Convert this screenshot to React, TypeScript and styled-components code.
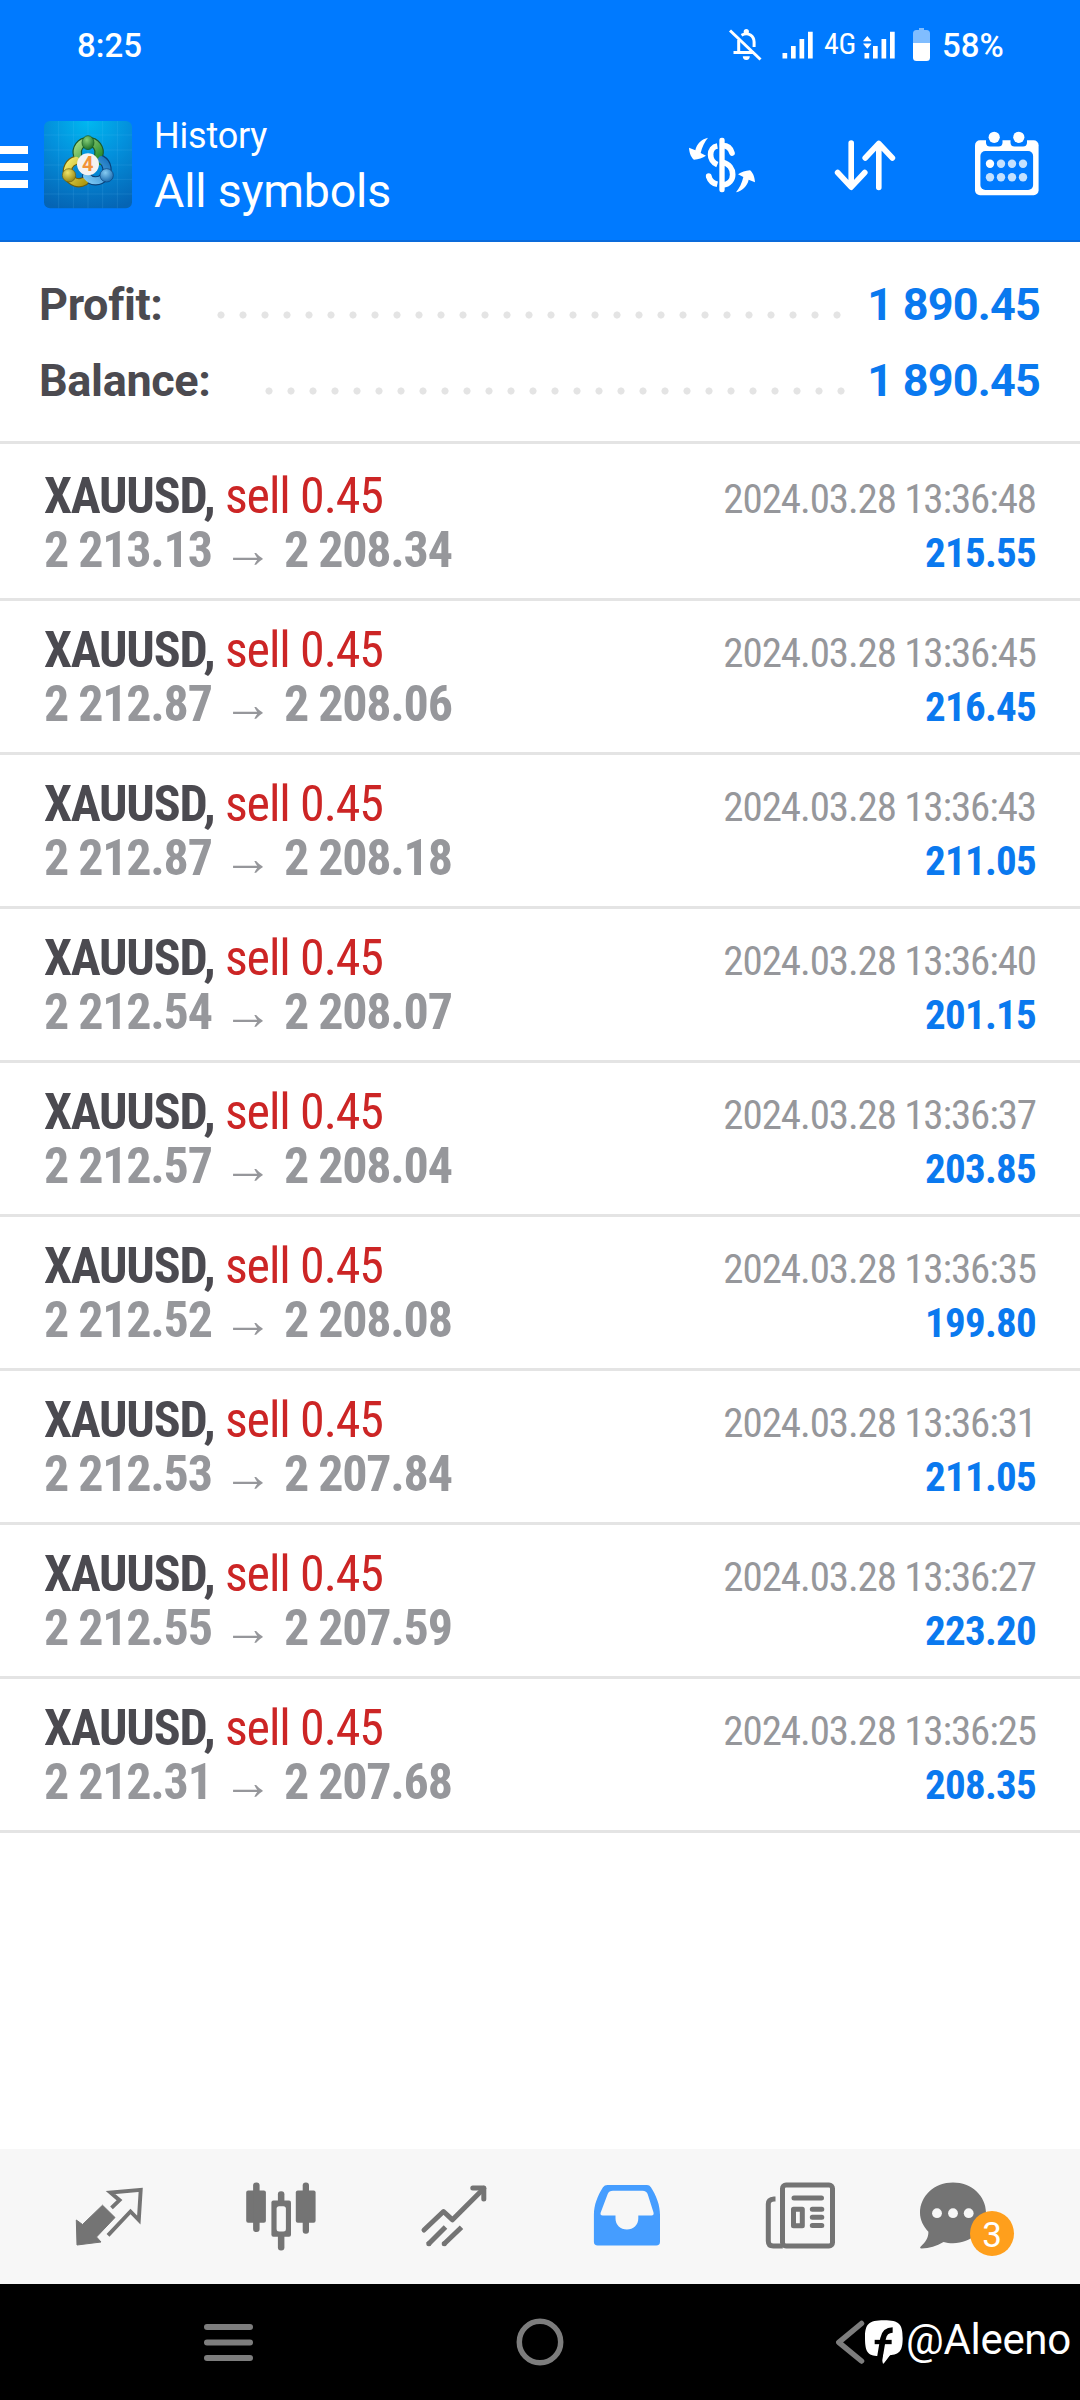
import React from 'react';
import styled, { createGlobalStyle } from 'styled-components';

const GlobalStyle = createGlobalStyle`
  * { box-sizing: border-box; }
  body { margin: 0; background: #fff; font-family: Roboto, 'Noto Sans', sans-serif; }
  svg { display: block; flex: none; }
`;

const Screen = styled.div`
  width: 1080px;
  height: 2400px;
  display: flex;
  flex-direction: column;
  background: #fff;
  overflow: hidden;
`;

/* ---------- header ---------- */

const Header = styled.header`
  height: 242px;
  flex: none;
  color: #fff;
  background: #007aff;
  border-bottom: 2px solid #0a6bdb;
`;

const StatusBar = styled.div`
  height: 92px;
  padding: 0 76px 2px 77px;
  display: flex;
  align-items: center;
  font-size: 33px;
  font-weight: 500;
`;

const Clock = styled.span`
  flex: 1;
`;

const StatusIcons = styled.div`
  display: flex;
  align-items: center;
`;

const SignalSlot = styled.span<{ $before: number }>`
  margin-left: ${(p) => p.$before}px;
`;

const Network = styled.span`
  width: 31px;
  margin: -4px 7px 0 10px;
  font-size: 30px;
  font-weight: 400;
  font-stretch: 75%;
  letter-spacing: -0.4px;
`;

const Percent = styled.span`
  width: 62px;
  margin-left: 11px;
`;

const AppBar = styled.div`
  height: 146px;
  display: flex;
  align-items: center;
  padding-right: 41px;
`;

const MenuButton = styled.div`
  width: 28px;
  margin-right: 16px;
  display: flex;
  flex-direction: column;
  gap: 9px;
  padding-top: 4px;
`;

const MenuBar = styled.span`
  height: 8px;
  background: #fff;
`;

const Titles = styled.div`
  flex: 1;
  padding: 4px 0 0 22px;
`;

const Section = styled.div`
  font-size: 36px;
  line-height: 48px;
  letter-spacing: -0.2px;
`;

const Filter = styled.div`
  font-size: 46.5px;
  line-height: 63px;
  letter-spacing: -0.2px;
`;

const Actions = styled.div`
  display: flex;
  align-items: center;
  gap: 77px;
`;

/* ---------- summary ---------- */

const Summary = styled.section`
  height: 205px;
  flex: none;
  padding: 25px 40px 0 39px;
  background: linear-gradient(#e4e4e4, #e4e4e4) 0 199px / 100% 3px no-repeat;
`;

const SummaryLine = styled.div`
  height: 76px;
  display: flex;
  align-items: center;
  font-size: 45px;
  font-weight: 700;
  line-height: 76px;
`;

const SummaryLabel = styled.span`
  color: #4b4a50;
  letter-spacing: -0.35px;
`;

const Leader = styled.span`
  flex: 1;
  height: 10px;
  margin: 20px 0 0 47px;
  background: radial-gradient(circle at 11px 5px, #e4e4e4 3.2px, transparent 3.9px) 0 0 / 22px 10px repeat-x;
`;

const SummaryValue = styled.span`
  width: 188px;
  text-align: right;
  color: #0a79ef;
  letter-spacing: -0.8px;
`;

/* ---------- deals ---------- */

const DealList = styled.main`
  flex: 1;
`;

const Deal = styled.div`
  height: 154px;
  padding: 22px 44px 0 44px;
  border-bottom: 3px solid #e4e4e4;
  font-stretch: 75%;
`;

const DealLine = styled.div`
  height: 54px;
  display: flex;
  justify-content: space-between;
  align-items: baseline;
  line-height: 54px;
  font-size: 50px;
  white-space: pre;
`;

const Symbol = styled.span`
  font-weight: 700;
  color: #4b4a50;
  letter-spacing: -1.2px;
`;

const Side = styled.span`
  font-weight: 400;
  color: #cc2525;
  letter-spacing: -1.1px;
`;

const Prices = styled.span`
  display: flex;
  align-items: baseline;
  font-weight: 700;
  color: #96979b;
  letter-spacing: -1.25px;
`;

const Price = styled.span`
  display: block;
`;

const OpenPrice = styled(Price)`
  width: 179px;
`;

const Arrow = styled.span`
  width: 61px;
  letter-spacing: 0;
`;

const Time = styled.span`
  font-size: 41px;
  color: #96979b;
  letter-spacing: -1.1px;
`;

const Profit = styled.span`
  font-size: 41px;
  font-weight: 700;
  color: #0a79ef;
  letter-spacing: -0.75px;
`;

/* ---------- bottom bars ---------- */

const TabBar = styled.nav`
  height: 135px;
  flex: none;
  display: grid;
  grid-template-columns: repeat(6, 173px);
  padding-left: 21px;
  background: #f7f7f7;
`;

const Tab = styled.div`
  position: relative;
  display: flex;
  align-items: center;
  justify-content: center;
`;

const ChatSlot = styled.div`
  margin-right: 38px;
`;

const Badge = styled.span`
  position: absolute;
  left: 84px;
  top: 62px;
  width: 44px;
  height: 45px;
  border-radius: 50%;
  background: #ff9f1c;
  color: #fff;
  font-size: 35px;
  line-height: 49px;
  text-align: center;
`;

const SystemNav = styled.footer`
  position: relative;
  height: 116px;
  flex: none;
  padding: 0 72px;
  display: grid;
  grid-template-columns: repeat(3, 312px);
  align-items: center;
  justify-items: center;
  background: #000;
`;

const Watermark = styled.div`
  position: absolute;
  left: 865px;
  top: 36px;
  display: flex;
  align-items: flex-start;
  color: #fff;
  font-size: 42px;
  line-height: 44px;
`;

const Handle = styled.span`
  margin: -2px 0 0 3px;
  letter-spacing: -0.3px;
`;

/* ---------- icons ---------- */

const BellOff = () => (
  <svg width="34" height="36" viewBox="728 26 34 36" fill="none" stroke="#fff" strokeWidth="3">
    <path d="M730 29.5 760.5 58.5" />
    <path d="M738.7 39v12.5M733.5 51.6H754" />
    <path d="M741.5 34.2c7-4 12.6 1.2 12.6 6.800v5" />
    <circle cx="746.3" cy="30.500" r="2.600" fill="#fff" stroke="none" />
    <path d="M742.800 55.300h7a3.500 3.700 0 0 1-7 0z" fill="#fff" stroke="none" />
  </svg>
);

const Signal = ({ data }: { data?: boolean }) => (
  <svg width="33" height="30" viewBox="0 0 33 30" fill="#fff">
    <path d="M1.500 23h4.700v5.500H1.500zM10 16h4.700v12.500H10zM18.500 9h4.700v19.500h-4.700zM27 1.700h4.700v26.800H27z" />
    {data && <path d="M.3 10.700 4.300 6l4 4.700v.6h-8zM.3 13.500h8v.6l-4 4.700-4-4.700z" />}
  </svg>
);

const Battery = () => (
  <svg width="18" height="34" viewBox="0 0 18 34" fill="#fff">
    <path opacity=".5" d="M6 0h5v2h2.500A3.500 3.500 0 0 1 17 5.500V15H0V5.500A3.500 3.500 0 0 1 3.500 2H6z" />
    <path d="M0 15h17v14.500a3.500 3.500 0 0 1-3.500 3.500h-10A3.500 3.500 0 0 1 0 29.500z" />
  </svg>
);

const Logo = () => (
  <svg width="88" height="88" viewBox="0 0 264 264">
    <defs>
      <radialGradient id="sky" cx=".5" cy="0" r="1.050">
        <stop offset="0" stopColor="#00b8f0" />
        <stop offset=".45" stopColor="#0390dc" />
        <stop offset="1" stopColor="#0564b4" />
      </radialGradient>
      <linearGradient id="green" x1="0" y1="0" x2="1" y2="1">
        <stop offset="0" stopColor="#a4dc86" />
        <stop offset="1" stopColor="#1d8424" />
      </linearGradient>
      <linearGradient id="gold" x1="0" y1="0" x2="1" y2="1">
        <stop offset="0" stopColor="#f2ea6c" />
        <stop offset="1" stopColor="#b09a10" />
      </linearGradient>
      <linearGradient id="blue" x1="1" y1="0" x2="0" y2="1">
        <stop offset="0" stopColor="#1b76c0" />
        <stop offset="1" stopColor="#7cc8f4" />
      </linearGradient>
      <radialGradient id="greenBall" cx=".4" cy=".3" r=".8">
        <stop offset="0" stopColor="#86cf78" />
        <stop offset="1" stopColor="#0f6420" />
      </radialGradient>
      <radialGradient id="goldBall" cx=".4" cy=".3" r=".8">
        <stop offset="0" stopColor="#eee468" />
        <stop offset="1" stopColor="#8a7a08" />
      </radialGradient>
      <radialGradient id="blueBall" cx=".4" cy=".3" r=".8">
        <stop offset="0" stopColor="#86cbf2" />
        <stop offset="1" stopColor="#0c5ea6" />
      </radialGradient>
    </defs>
    <rect width="264" height="262" rx="18" fill="url(#sky)" />
    <path stroke="#7fd4ff" strokeOpacity=".2" strokeWidth="2" d="M88 0v262M132 0v262M176 0v262M44 0v262M220 0v262M0 42h264M0 87h264M0 132h264M0 175h264M0 219h264" />
    <g fill="none" strokeLinecap="round">
      <path stroke="#1c5a2c" strokeWidth="28" d="M101 104a33 33 0 1 1 63 0v14" />
      <path stroke="#6a5e10" strokeWidth="28" d="M122 180a34 34 0 1 1-26-62" />
      <path stroke="#0a4078" strokeWidth="28" d="M172 116a34 34 0 1 1-44 50" />
      <path stroke="url(#green)" strokeWidth="21" d="M101 104a33 33 0 1 1 63 0v18" />
      <path stroke="url(#gold)" strokeWidth="21" d="M122 180a34 34 0 1 1-26-62" />
      <path stroke="url(#blue)" strokeWidth="21" d="M172 116a34 34 0 1 1-44 50" />
    </g>
    <ellipse cx="132" cy="65" rx="18" ry="21" fill="url(#greenBall)" stroke="#14561f" strokeWidth="2" />
    <circle cx="75" cy="163" r="20" fill="url(#goldBall)" stroke="#6a5e10" strokeWidth="2" />
    <circle cx="188" cy="163" r="20" fill="url(#blueBall)" stroke="#0a4078" strokeWidth="2" />
    <circle cx="132" cy="130" r="33" fill="#f4f2f2" />
    <text x="131" y="151" textAnchor="middle" fontFamily="Roboto, sans-serif" fontWeight="700" fontSize="60" fill="#f29338">4</text>
  </svg>
);

const DealsCurrency = () => (
  <svg width="70" height="60" viewBox="21 30 210 180" fill="#fff">
    <rect x="118" y="38" width="16" height="164" rx="7" />
    <g fill="none" stroke="#fff" strokeWidth="17">
      <path d="M112 63C86 67 84 108 112 119" />
      <path d="M128 62c14 0 24 8 28 22" strokeLinecap="round" />
      <path d="M128 112C168 122 168 176 128 180" />
      <path d="M112 178c-14-3-22-11-26-24" />
      <path d="M86 153v.100" strokeLinecap="round" />
    </g>
    <path d="M84 38C66 42 50 56 46 76L27 68C28 85 34 98 42 104C55 103 68 99 78 92L62 84C66 66 74 50 84 38z" />
    <path d="M168 202C186 198 202 184 206 164L225 172C224 155 218 142 210 136C197 137 184 141 174 148L190 156C186 174 178 190 168 202z" />
  </svg>
);

const Sort = () => (
  <svg width="64" height="54" viewBox="834 138 64 54" fill="none" stroke="#fff" strokeWidth="5.600" strokeLinecap="round" strokeLinejoin="round">
    <path d="M851.200 143v44M837.600 172.500l13.600 14.700 13.600-14.700" />
    <path d="M878.800 187.500v-44M865.200 158l13.600-14.500L892.400 158" />
  </svg>
);

const Calendar = () => (
  <svg width="64" height="68" viewBox="975 131 64 68">
    <rect x="975" y="140.300" width="63.600" height="55" rx="5" fill="#fff" />
    <path fill="#007aff" d="M986 139h16.500v4a4 4 0 0 1-4 3.500h-8.500a4 4 0 0 1-4-3.500zM1010.500 139h16.500v4a4 4 0 0 1-4 3.500h-8.500a4 4 0 0 1-4-3.500z" />
    <circle cx="994.200" cy="137.300" r="5.600" fill="#fff" />
    <circle cx="1018.800" cy="137.300" r="5.600" fill="#fff" />
    <rect x="980.400" y="151" width="52.700" height="39" rx="5" fill="#007aff" />
    {[163.700, 177.300].map((y) =>
      [990, 1001, 1012, 1023].map((x) => (
        <circle key={`${x}-${y}`} cx={x} cy={y} r="4.200" fill={x === 990 && y < 170 ? '#fff' : '#c4e1ff'} />
      )),
    )}
  </svg>
);

const GREY = '#747474';

const TradeIcon = () => (
  <svg width="72" height="72" viewBox="71.500 2180.500 72 72">
    <path fill={GREY} stroke={GREY} strokeLinejoin="round" d="M75.800 2219.500 82 2224 102 2204.700 114.500 2217 96 2236.500 100.500 2241.500 76.500 2244.500z" />
    <path fill="none" stroke={GREY} strokeWidth="3.900" d="M111 2207.300 119 2199.700 110 2192 140.200 2189.300 138.300 2219.500 130 2211 107.500 2234.800" />
  </svg>
);

const CandlesIcon = () => (
  <svg width="72" height="72" viewBox="245 2180.500 72 72" fill={GREY}>
    <rect x="246.200" y="2190" width="19.700" height="32.200" rx="2" />
    <rect x="253.100" y="2182" width="6.500" height="49.500" rx="3" />
    <rect x="295.800" y="2190" width="19.800" height="32.200" rx="2" />
    <rect x="302.700" y="2182" width="6.300" height="51.300" rx="3" />
    <rect x="277.900" y="2190.700" width="6.500" height="59.300" rx="3" />
    <rect x="271.400" y="2200" width="19.600" height="36.300" rx="2" />
    <rect x="276.600" y="2205.700" width="9.300" height="25.300" rx="2.500" fill="#f7f7f7" />
  </svg>
);

const TrendIcon = () => (
  <svg width="72" height="72" viewBox="418 2180.500 72 72" fill="none" stroke={GREY} strokeWidth="5">
    <path strokeLinecap="round" strokeLinejoin="round" d="M424 2229.500 443.500 2211 452.500 2219.300 483.800 2188" />
    <path strokeLinecap="round" strokeLinejoin="round" d="M472.800 2187.500h11v11" />
    <path d="M428 2244 445.500 2226.500M443.500 2244 461.500 2226.800" />
    <path strokeLinecap="round" d="M428.800 2243.200v.010M444.200 2243.200v.010" />
  </svg>
);

const HistoryIcon = () => (
  <svg width="72" height="72" viewBox="591.500 2180.500 72 72">
    <path
      fill="#459dff"
      fillRule="evenodd"
      d="M608 2184.500h39.500q2.500 0 3.900 2.200c5.500 8.500 9.100 18 9.100 27.500v27q0 3.800-3.800 3.800h-58.500q-3.800 0-3.800-3.800v-27c0-9.500 3.600-19 9.100-27.500q1.500-2.200 4.500-2.200zM613.500 2190.300q-4 0-5.300 3.200l-7 18.500q-.9 3 2 3H616v3c0 6.500 5 11 11.400 11s11.400-4.500 11.400-11v-3h13.200q2.700 0 2-3l-5.700-18q-1.300-3.700-5.300-3.700z"
    />
  </svg>
);

const NewsIcon = () => (
  <svg width="72" height="72" viewBox="764.500 2180.500 72 72" fill="none" stroke={GREY} strokeWidth="5" strokeLinecap="round">
    <rect x="783" y="2184.500" width="50" height="61" rx="3.500" />
    <path strokeLinecap="butt" d="M776 2198.500h-1.500q-5.700.5-5.700 5v37q0 5 5 5h9.500" />
    <path d="M794.500 2197.500h27.500M812.800 2208.700h9.500M812.800 2216.800h9.500M812.800 2225h9.500" />
    <rect x="794" y="2208.700" width="8.800" height="16.500" strokeLinejoin="round" />
  </svg>
);

const ChatIcon = () => (
  <svg width="72" height="72" viewBox="918 2180.500 72 72">
    <path fill={GREY} d="M953 2182c18.500 0 33 13.300 33 30.300s-14.500 30.400-33 30.400c-3.500 0-6.500-.5-9.500-1.300-7 4.300-14 6.400-22 6.500-1.500 0-1.800-1-.7-2 4.700-4.200 7.700-8.700 7.600-14.700-5-5.200-8.400-11.700-8.400-18.900 0-17 14.500-30.300 33-30.300z" />
    {[937, 953, 968.700].map((x) => (
      <circle key={x} cx={x} cy="2212.700" r="4.900" fill="#f7f7f7" />
    ))}
  </svg>
);

const NAV = '#7d7d7d';

const FacebookMark = () => (
  <svg width="38" height="44" viewBox="105 32 114 132">
    <path fill="#fff" d="M162 33c46 0 56 11 56 54 0 38-9 48-39 51l-20 25-6-22c-38 0-48-10-48-54 0-43 10-54 57-54z" />
    <path fill="none" stroke="#000" strokeWidth="17" d="M147 160 159 88q5-26 29-26" />
    <path fill="none" stroke="#000" strokeWidth="13" d="M134 98h51" />
    <path fill="#fff" d="M159 136h22l-21 28z" />
  </svg>
);

/* ---------- data ---------- */

const deals = [
  { open: '2 213.13', close: '2 208.34', time: '13:36:48', profit: '215.55' },
  { open: '2 212.87', close: '2 208.06', time: '13:36:45', profit: '216.45' },
  { open: '2 212.87', close: '2 208.18', time: '13:36:43', profit: '211.05' },
  { open: '2 212.54', close: '2 208.07', time: '13:36:40', profit: '201.15' },
  { open: '2 212.57', close: '2 208.04', time: '13:36:37', profit: '203.85' },
  { open: '2 212.52', close: '2 208.08', time: '13:36:35', profit: '199.80' },
  { open: '2 212.53', close: '2 207.84', time: '13:36:31', profit: '211.05' },
  { open: '2 212.55', close: '2 207.59', time: '13:36:27', profit: '223.20' },
  { open: '2 212.31', close: '2 207.68', time: '13:36:25', profit: '208.35' },
];

const totals = [
  { label: 'Profit:', value: '1 890.45' },
  { label: 'Balance:', value: '1 890.45' },
];

export default function App() {
  return (
    <Screen>
      <GlobalStyle />
      <Header>
        <StatusBar>
          <Clock>8:25</Clock>
          <StatusIcons>
            <BellOff />
            <SignalSlot $before={19}><Signal /></SignalSlot>
            <Network>4G</Network>
            <SignalSlot $before={1}><Signal data /></SignalSlot>
            <SignalSlot $before={17}><Battery /></SignalSlot>
            <Percent>58%</Percent>
          </StatusIcons>
        </StatusBar>
        <AppBar>
          <MenuButton>
            <MenuBar />
            <MenuBar />
            <MenuBar />
          </MenuButton>
          <Logo />
          <Titles>
            <Section>History</Section>
            <Filter>All symbols</Filter>
          </Titles>
          <Actions>
            <DealsCurrency />
            <Sort />
            <Calendar />
          </Actions>
        </AppBar>
      </Header>
      <Summary>
        {totals.map((t) => (
          <SummaryLine key={t.label}>
            <SummaryLabel>{t.label}</SummaryLabel>
            <Leader />
            <SummaryValue>{t.value}</SummaryValue>
          </SummaryLine>
        ))}
      </Summary>
      <DealList>
        {deals.map((d) => (
          <Deal key={d.time}>
            <DealLine>
              <span>
                <Symbol>XAUUSD, </Symbol>
                <Side>sell 0.45</Side>
              </span>
              <Time>2024.03.28 {d.time}</Time>
            </DealLine>
            <DealLine>
              <Prices>
                <OpenPrice>{d.open}</OpenPrice>
                <Arrow>→</Arrow>
                <Price>{d.close}</Price>
              </Prices>
              <Profit>{d.profit}</Profit>
            </DealLine>
          </Deal>
        ))}
      </DealList>
      <TabBar>
        <Tab><TradeIcon /></Tab>
        <Tab><CandlesIcon /></Tab>
        <Tab><TrendIcon /></Tab>
        <Tab><HistoryIcon /></Tab>
        <Tab><NewsIcon /></Tab>
        <Tab>
          <ChatSlot><ChatIcon /></ChatSlot>
          <Badge>3</Badge>
        </Tab>
      </TabBar>
      <SystemNav>
        <svg width="49" height="37" viewBox="0 0 49 37" fill={NAV}>
          <rect width="49" height="6" rx="3" />
          <rect y="15.500" width="49" height="6" rx="3" />
          <rect y="31" width="49" height="6" rx="3" />
        </svg>
        <svg width="48" height="48" viewBox="0 0 48 48" fill="none" stroke={NAV} strokeWidth="5.500">
          <circle cx="24" cy="24" r="20.700" />
        </svg>
        <svg width="32" height="46" viewBox="836 2319 32 46" fill="none" stroke={NAV} strokeWidth="5.500" strokeLinecap="round" strokeLinejoin="round">
          <path d="M861.500 2323.500 838.800 2342.300 861.500 2361" />
        </svg>
        <Watermark>
          <FacebookMark />
          <Handle>@Aleeno</Handle>
        </Watermark>
      </SystemNav>
    </Screen>
  );
}
